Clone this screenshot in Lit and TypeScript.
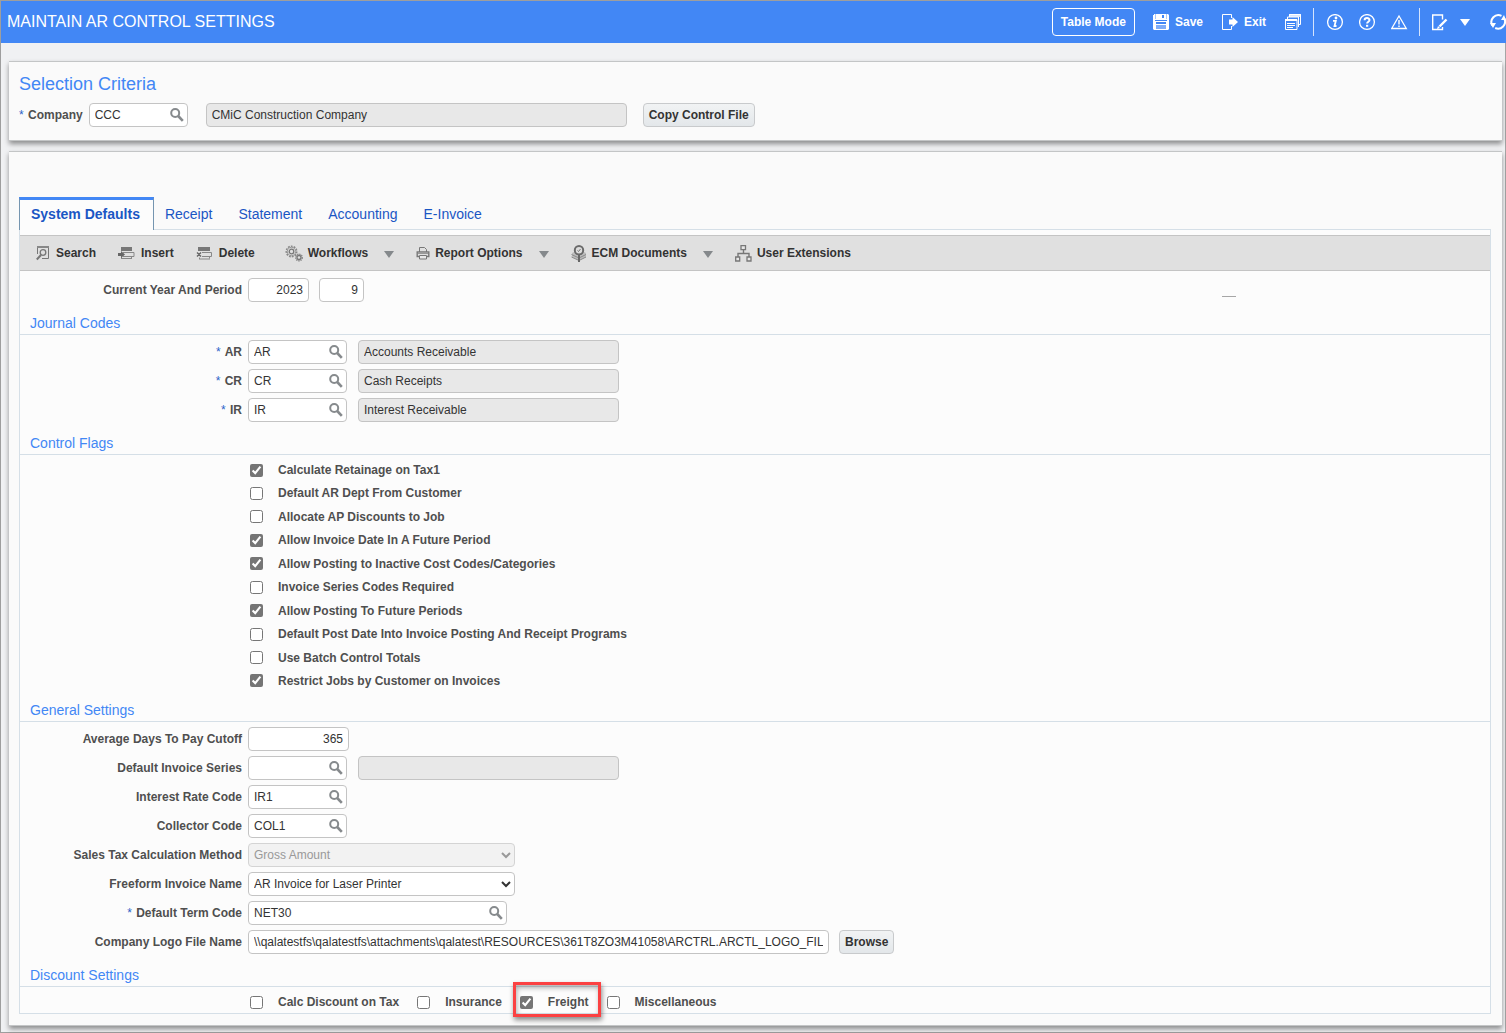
import { LitElement, html, svg, css, nothing, type TemplateResult } from "lit";
import { customElement, property, state } from "lit/decorators.js";
import { classMap } from "lit/directives/class-map.js";
import { live } from "lit/directives/live.js";

const icon = (w: number, h: number, body: unknown) =>
  html`<svg width=${w} height=${h} viewBox="0 0 ${w} ${h}" fill="none" aria-hidden="true">${body}</svg>`;

const icons = {
  magnifier: icon(14, 14, svg`
    <circle cx="5.2" cy="5" r="4" stroke="#868a8d" stroke-width="2"/>
    <path d="M8.2 8 L12.8 12.800" stroke="#868a8d" stroke-width="2.6"/>`),
  save: icon(16, 16, svg`
    <path d="M0 1h1V0h14l1 1v14l-1 1H1l-1-1z" fill="#fff"/>
    <path d="M2 0h1v5H2zM13 0h1v5h-1z" fill="#a9c8fb"/>
    <path d="M9 1h2v3H9z" fill="#4287f5"/>
    <path d="M2 6h12v1H2z" fill="#4287f5"/>
    <path d="M3 8h10v2H3z" fill="#4287f5"/>
    <path d="M3 11h10v4H3z" fill="#7fadf9"/>`),
  exit: icon(16, 17, svg`
    <path d="M9.500 4V.5h-9v15h9V12" stroke="#fff"/>
    <path d="M7 5.500h3.500V3L16 8l-5.500 5v-2.500H7z" fill="#fff"/>`),
  windows: icon(17, 17, svg`
    <path d="M4.500 3V.5h11v10H14" stroke="#fff"/>
    <path d="M4 0h12v3H4z" fill="#fff" opacity=".8"/>
    <path d="M2.500 5V3h11v10" stroke="#fff"/>
    <path d="M.5 5.500h11.500v10H.5z" stroke="#fff" fill="#4287f5"/>
    <path d="M0 5h12v2H0z" fill="#fff"/>
    <path d="M2 9.500h8M2 11.500h8M2 13.500h6" stroke="#fff"/>`),
  info: icon(17, 17, svg`
    <circle cx="8" cy="8" r="7.400" stroke="#fff" stroke-width="1.300"/>
    <circle cx="9" cy="4" r="1.400" fill="#fff"/>
    <path d="M6 6.800h2.800L7.500 12h2" stroke="#fff" stroke-width="1.800"/>`),
  help: icon(17, 17, svg`
    <circle cx="8" cy="8" r="7.400" stroke="#fff" stroke-width="1.300"/>
    <path d="M5.600 6.200C5.600 3.500 10.500 3.400 10.500 6c0 1.700-2.400 1.700-2.400 3.600" stroke="#fff" stroke-width="2"/>
    <path d="M7 10.800h2.200v2H7z" fill="#fff"/>`),
  warning: icon(17, 17, svg`
    <path d="M8 2 L15.300 14.500 H.7z" stroke="#fff" stroke-width="1.300"/>
    <path d="M8 6v4.500M8 11.500v1.500" stroke="#fff" stroke-width="1.400"/>`),
  edit: icon(16, 17, svg`
    <path d="M10.500 5.500V1H.7v14.500h9.800V13" stroke="#fff" stroke-width="1.400"/>
    <path d="M14.500 5.500 L7.500 12.500" stroke="#fff" stroke-width="2.400"/>
    <path d="M5 15l1-3 2 2z" fill="#fff"/>`),
  refresh: icon(16, 18, svg`
    <path d="M2.300 12.500A7 7 0 0 1 11.500 2.800" stroke="#fff" stroke-width="2"/>
    <path d="M14.300 5.500A7 7 0 0 1 5.200 15" stroke="#fff" stroke-width="2"/>
    <path d="M0 10h6l-3 5z" fill="#fff"/>
    <path d="M16 7h-5l3-5z" fill="#fff"/>`),
  search: icon(14, 16, svg`
    <path d="M1.500 9V1.500h11v12H6" stroke="#777"/>
    <path d="M1 1h12v2H1z" fill="#888"/>
    <circle cx="7" cy="7.500" r="2.800" stroke="#777" stroke-width="1.300"/>
    <path d="M5 10 L.8 14.500" stroke="#777" stroke-width="2"/>`),
  insert: icon(17, 15, svg`
    <path d="M3 1h11v4H3z" fill="#777"/>
    <path d="M5 6.500h11v4H5" stroke="#888"/>
    <path d="M3 12.500h11M3.500 10.500v2M13.500 10.500v2" stroke="#888"/>
    <path d="M0 7h3V5l4 3.500L3 12v-2H0z" fill="#666"/>`),
  remove: icon(17, 15, svg`
    <path d="M2 1h12v4H2z" fill="#777"/>
    <path d="M6 6.500h9.500v4H6" stroke="#888"/>
    <path d="M3 13h11M3.500 11.500v1.500M13.500 10.500v2" stroke="#888"/>
    <path d="M1 6.500l4 4M5 6.500l-4 4" stroke="#666" stroke-width="1.400"/>`),
  gears: icon(18, 17, svg`
    <circle cx="6.500" cy="6.500" r="5.200" stroke="#888" stroke-width="1.600" stroke-dasharray="1.800 1.100"/>
    <circle cx="6.500" cy="6.500" r="4.200" stroke="#999"/>
    <circle cx="6.500" cy="6.500" r="2.300" stroke="#777" stroke-width="1.300"/>
    <circle cx="14" cy="12.500" r="3.300" stroke="#888" stroke-width="1.400" stroke-dasharray="1.400 .8"/>
    <circle cx="14" cy="12.500" r="2" stroke="#777" stroke-width="1.300"/>`),
  printer: icon(14, 14, svg`
    <path d="M3.500 6V1.500h5l2 2V6" stroke="#777"/>
    <path d="M3 10.500H1.200V6h11.600v4.500H11" stroke="#777" stroke-width="1.400"/>
    <path d="M2 6h10v2H2z" fill="#999"/>
    <path d="M3.500 9.500h7v3.500h-7z" stroke="#777" fill="#e8e8e8"/>`),
  documents: icon(16, 17, svg`
    <path d="M1 8l4-2 3 2 3-2 4 2v4l-7 3.500L1 12z" fill="#bdbdbd"/>
    <path d="M.5 9.500l6.500 3M.5 12l6.500 3M9 12.500l6-3M9 15l6-3" stroke="#8a8a8a"/>
    <path d="M7 9h2v8H7z" fill="#666"/>
    <circle cx="8" cy="5.200" r="4.200" stroke="#6a6a6a" stroke-width="2" fill="#ddd"/>
    <path d="M6.500 5.500l1 1 2-2.500" stroke="#777"/>`),
  hierarchy: icon(17, 17, svg`
    <path d="M8.500 5v4M3 12V8.500h11V12" stroke="#777" stroke-width="1.400"/>
    <path d="M6 .7h4.500v4H6zM.7 12h4v4h-4zM12 12h4v4h-4z" stroke="#777" stroke-width="1.300" fill="#e6e6e6"/>`),
  caret: html`<svg width="10" height="7" viewBox="0 0 10 7" aria-hidden="true"><path d="M0 0h10L5 7z" fill="currentColor"/></svg>`,
};

interface Flag {
  label: string;
  on: boolean;
  marked?: boolean;
}

@customElement("check-option")
class CheckOption extends LitElement {
  @property() label = "";
  @property({ type: Boolean }) checked = false;
  @property({ type: Boolean, reflect: true }) marked = false;

  static styles = css`
    :host { display: block; position: relative; }
    label { display: flex; align-items: center; gap: 15px; height: 16px; white-space: nowrap; }
    input { width: 13px; height: 13px; margin: 0; accent-color: #757575; }
    .mark {
      position: absolute;
      inset: -12px -12px -7px -7px;
      border: 3px solid #fb4142;
      box-shadow: 1px 3px 5px rgba(0, 0, 0, 0.45), inset 1px 3px 5px rgba(0, 0, 0, 0.3);
      pointer-events: none;
    }
  `;

  render() {
    return html`
      <label>
        <input type="checkbox" .checked=${live(this.checked)}
          @change=${(e: Event) => (this.checked = (e.target as HTMLInputElement).checked)} />
        <span>${this.label}</span>
      </label>
      ${this.marked ? html`<span class="mark"></span>` : nothing}
    `;
  }
}

@customElement("app-root")
class AppRoot extends LitElement {
  @state() private tab = "System Defaults";

  private tabs = ["System Defaults", "Receipt", "Statement", "Accounting", "E-Invoice"];

  private journals = [
    { code: "AR", name: "Accounts Receivable" },
    { code: "CR", name: "Cash Receipts" },
    { code: "IR", name: "Interest Receivable" },
  ];

  private flags: Flag[] = [
    { label: "Calculate Retainage on Tax1", on: true },
    { label: "Default AR Dept From Customer", on: false },
    { label: "Allocate AP Discounts to Job", on: false },
    { label: "Allow Invoice Date In A Future Period", on: true },
    { label: "Allow Posting to Inactive Cost Codes/Categories", on: true },
    { label: "Invoice Series Codes Required", on: false },
    { label: "Allow Posting To Future Periods", on: true },
    { label: "Default Post Date Into Invoice Posting And Receipt Programs", on: false },
    { label: "Use Batch Control Totals", on: false },
    { label: "Restrict Jobs by Customer on Invoices", on: true },
  ];

  private discounts: Flag[] = [
    { label: "Calc Discount on Tax", on: false },
    { label: "Insurance", on: false },
    { label: "Freight", on: true, marked: true },
    { label: "Miscellaneous", on: false },
  ];

  static styles = css`
    :host {
      display: flex;
      flex-direction: column;
      box-sizing: border-box;
      min-height: 100vh;
      border: 1px solid #9e9e9e;
      border-right: 0;
      background: #f0f1f3;
      color: #4f4f4f;
      font: bold 12px/16px "Liberation Sans", Arial, sans-serif;
    }
    * { box-sizing: border-box; }
    svg { display: block; flex: none; }
    button { font: inherit; color: inherit; background: none; border: 0; padding: 0; cursor: pointer; }
    h1, h2, h3 { margin: 0; font-weight: normal; }

    .header {
      display: flex;
      align-items: center;
      justify-content: space-between;
      height: 42px;
      padding-left: 6px;
      overflow: hidden;
      background: #4287f5;
      color: #fff;
    }
    .header h1 { font-size: 16px; line-height: 20px; white-space: nowrap; }
    .actions { display: flex; align-items: center; }
    .actions button { display: flex; align-items: center; gap: 6px; white-space: nowrap; }
    .actions .mode { height: 28px; padding: 0 8px; margin-right: 18px; border: 1px solid #fff; border-radius: 4px; }
    .cluster { display: flex; align-items: center; }
    .main-actions { gap: 19px; padding-right: 11px; }
    .status-actions { gap: 15px; height: 28px; padding: 0 11px 0 13px; border: solid #d5e4fd; border-width: 0 1px; }
    .edit-actions { gap: 12px; padding: 0 20px 0 12px; }

    .content {
      flex: 1;
      display: flex;
      flex-direction: column;
      gap: 10px;
      padding: 18px 3px 6px 8px;
      border-right: 1px solid #a5a5a5;
    }
    .panel {
      border: solid #c3c5c6;
      border-width: 1px 0;
      background: #fafafa;
      box-shadow: 0 3px 5px rgba(0, 0, 0, 0.42);
    }
    .criteria { padding: 12px 10px 13px; }
    .criteria h2 { margin-bottom: 9px; font-size: 18px; line-height: 20px; color: #4287f5; }
    .line { display: flex; align-items: center; }
    .criteria .caption { margin-right: 6px; }
    .criteria .readout { flex: 0 1 421px; margin: 0 16px 0 18px; }
    .settings { flex: 1; padding: 45px 11px 11px 10px; }

    .tabs { display: flex; height: 32px; position: relative; z-index: 1; }
    .tab {
      margin-left: 26px;
      padding-top: 2px;
      font-size: 14px;
      font-weight: normal;
      color: #1a56c4;
      white-space: nowrap;
    }
    .tab.active {
      height: 33px;
      margin: 0 11px 0 0;
      padding: 0 13px 2px 11px;
      border: solid #7595b0;
      border-width: 3px 1px 0;
      border-top-color: #4287f5;
      background: #fcfcfc;
      font-weight: bold;
    }
    .tab.active + .tab { margin-left: 0; }
    .sheet { border: 1px solid #d5dfe7; padding-top: 5px; background: #fcfcfc; }

    .toolbar {
      display: flex;
      align-items: center;
      gap: 22px;
      height: 36px;
      padding-left: 16px;
      border: solid #c4c4c4;
      border-width: 1px 0;
      background: #e0e0e0;
      color: #333;
    }
    .toolbar button { display: flex; align-items: center; gap: 6px; white-space: nowrap; }
    .split { display: flex; align-items: center; gap: 16px; color: #333; }
    .toolbar .split button, .toolbar .tight { gap: 5px; }
    .toolbar .split .drop { color: #85898c; padding-top: 2px; }
    .first-split { margin-left: 8px; }

    .period { display: flex; align-items: center; padding-top: 7px; }
    .dash { align-self: flex-end; width: 14px; height: 1px; margin: 0 254px 5px auto; background: #a6a6a6; }

    .section h3 {
      padding: 13px 10px 3px;
      border-bottom: 1px solid #d5dfe7;
      font-size: 14px;
      line-height: 16px;
      color: #4287f5;
    }
    .rows { display: grid; gap: 5px; padding-top: 5px; }
    .row { display: grid; grid-template-columns: 222px 1fr; gap: 6px; align-items: center; }
    .row > label { text-align: right; }
    .req { margin-right: 1px; color: #2c62c8; font-weight: normal; }
    .fields { display: flex; align-items: center; gap: 10px; }
    .fields .readout { margin-left: 1px; }

    input, select, .lov {
      height: 24px;
      border: 1px solid #c4c4c4;
      border-radius: 4px;
      background: #fff;
      color: #333;
      font: 12px/16px "Liberation Sans", Arial, sans-serif;
    }
    input { padding: 0 5px 1px; margin: 0; outline: none; }
    select { padding: 0 1px 1px; margin: 0; }
    select:disabled { background: #f2f2f2; border-color: #d4d4d4; color: #999; opacity: 1; }
    .num { text-align: right; }
    .readout { background: #e8e8e8; }
    .lov { display: flex; align-items: center; padding-right: 3px; }
    .lov input { flex: 1; min-width: 0; height: 22px; border: 0; background: none; }
    .w45 { width: 45px; }
    .w61 { width: 61px; }
    .w99 { width: 99px; }
    .w101 { width: 101px; }
    .w259 { width: 259px; }
    .w261 { width: 261px; }
    .w267 { width: 267px; }
    .w581 { width: 581px; }
    .push {
      height: 24px;
      padding: 0 5px;
      border: 1px solid #c8cacc;
      border-radius: 4px;
      background: linear-gradient(#f1f3f4, #e3e7ea);
      color: #333;
      white-space: nowrap;
    }

    .flags {
      display: flex;
      flex-direction: column;
      justify-content: space-between;
      align-items: flex-start;
      min-height: 234px;
      padding: 7px 0 0 230px;
    }
    .discounts { display: flex; flex-wrap: wrap; gap: 18px; padding: 7px 0 3px 230px; }
  `;

  private lov(id: string, value: string, width = "w99") {
    return html`<span class="lov ${width}">
      <input id=${id} type="text" .value=${value} />
      <button type="button" aria-label="Search">${icons.magnifier}</button>
    </span>`;
  }

  private row(id: string, label: string, field: TemplateResult, required = false) {
    return html`<div class="row">
      <label for=${id}>${required ? html`<span class="req">*</span> ` : nothing}${label}</label>
      <div class="fields">${field}</div>
    </div>`;
  }

  private readout(label: string, value: string) {
    return html`<input class="readout w261" type="text" readonly aria-label=${label} .value=${value} />`;
  }

  private split(glyph: TemplateResult, label: string, first = false) {
    return html`<span class=${classMap({ split: true, "first-split": first })}>
      <button type="button">${glyph}${label}</button>
      <button class="drop" type="button" aria-label="${label} menu">${icons.caret}</button>
    </span>`;
  }

  private option(f: Flag) {
    return html`<check-option .label=${f.label} .checked=${f.on} .marked=${!!f.marked}></check-option>`;
  }

  render() {
    return html`
      <header class="header">
        <h1>MAINTAIN AR CONTROL SETTINGS</h1>
        <div class="actions">
          <button class="mode" type="button">Table Mode</button>
          <div class="cluster main-actions">
            <button type="button">${icons.save}Save</button>
            <button type="button">${icons.exit}Exit</button>
            <button type="button" aria-label="Windows">${icons.windows}</button>
          </div>
          <div class="cluster status-actions">
            <button type="button" aria-label="Information">${icons.info}</button>
            <button type="button" aria-label="Help">${icons.help}</button>
            <button type="button" aria-label="Warnings">${icons.warning}</button>
          </div>
          <div class="cluster edit-actions">
            <button type="button" aria-label="Edit">${icons.edit}</button>
            <button type="button" aria-label="Edit menu">${icons.caret}</button>
          </div>
          <button type="button" aria-label="Refresh">${icons.refresh}</button>
        </div>
      </header>

      <main class="content">
        <section class="panel criteria">
          <h2>Selection Criteria</h2>
          <div class="line">
            <label class="caption" for="company"><span class="req">*</span> Company</label>
            ${this.lov("company", "CCC")}
            <input class="readout" type="text" readonly aria-label="Company name" .value=${"CMiC Construction Company"} />
            <button class="push" type="button">Copy Control File</button>
          </div>
        </section>

        <section class="panel settings">
          <nav class="tabs" role="tablist">
            ${this.tabs.map((t) => html`<button type="button" role="tab"
              aria-selected=${t === this.tab ? "true" : "false"}
              class=${classMap({ tab: true, active: t === this.tab })}
              @click=${() => (this.tab = t)}>${t}</button>`)}
          </nav>
          <div class="sheet">
            <div class="toolbar">
              <button type="button">${icons.search}Search</button>
              <button type="button">${icons.insert}Insert</button>
              <button type="button">${icons.remove}Delete</button>
              ${this.split(icons.gears, "Workflows", true)}
              ${this.split(icons.printer, "Report Options")}
              ${this.split(icons.documents, "ECM Documents")}
              <button class="tight" type="button">${icons.hierarchy}User Extensions</button>
            </div>

            <div class="period">
              ${this.row("year", "Current Year And Period", html`
                <input id="year" class="num w61" type="text" .value=${"2023"} />
                <input class="num w45" type="text" aria-label="Period" .value=${"9"} />`)}
              <span class="dash"></span>
            </div>

            <section class="section">
              <h3>Journal Codes</h3>
              <div class="rows">
                ${this.journals.map((j) => this.row(j.code, j.code,
                  html`${this.lov(j.code, j.code)}${this.readout(`${j.code} description`, j.name)}`, true))}
              </div>
            </section>

            <section class="section">
              <h3>Control Flags</h3>
              <div class="flags">${this.flags.map((f) => this.option(f))}</div>
            </section>

            <section class="section">
              <h3>General Settings</h3>
              <div class="rows">
                ${this.row("cutoff", "Average Days To Pay Cutoff",
                  html`<input id="cutoff" class="num w101" type="text" .value=${"365"} />`)}
                ${this.row("series", "Default Invoice Series",
                  html`${this.lov("series", "")}${this.readout("Invoice series description", "")}`)}
                ${this.row("rate", "Interest Rate Code", this.lov("rate", "IR1"))}
                ${this.row("collector", "Collector Code", this.lov("collector", "COL1"))}
                ${this.row("tax", "Sales Tax Calculation Method",
                  html`<select id="tax" class="w267" disabled><option>Gross Amount</option></select>`)}
                ${this.row("freeform", "Freeform Invoice Name",
                  html`<select id="freeform" class="w267"><option>AR Invoice for Laser Printer</option></select>`)}
                ${this.row("term", "Default Term Code", this.lov("term", "NET30", "w259"), true)}
                ${this.row("logo", "Company Logo File Name", html`
                  <input id="logo" class="w581" type="text"
                    .value=${String.raw`\\qalatestfs\qalatestfs\attachments\qalatest\RESOURCES\361T8ZO3M41058\ARCTRL.ARCTL_LOGO_FIL`} />
                  <button class="push" type="button">Browse</button>`)}
              </div>
            </section>

            <section class="section">
              <h3>Discount Settings</h3>
              <div class="discounts">${this.discounts.map((f) => this.option(f))}</div>
            </section>
          </div>
        </section>
      </main>
    `;
  }
}
